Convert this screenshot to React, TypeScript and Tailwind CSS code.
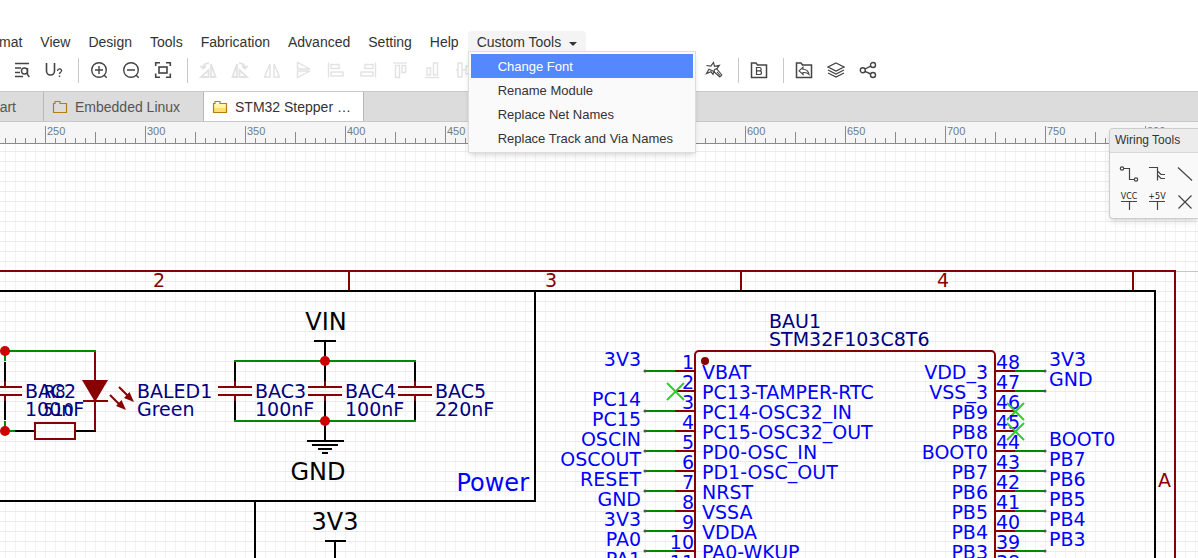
import type { ReactNode } from "react";

const menus = ["Format", "View", "Design", "Tools", "Fabrication", "Advanced", "Setting", "Help"];
const customTools = ["Change Font", "Rename Module", "Replace Net Names", "Replace Track and Via Names"];

const NAVY = "#000080";
const BLUE = "#0000ff";
const MAROON = "#880000";
const GREEN = "#008800";

function Icon({ children, muted = false }: { children: ReactNode; muted?: boolean }) {
  return (
    <svg width="18" height="18" viewBox="0 0 18 18" fill="none" stroke={muted ? "#e2e2e2" : "#444"} strokeWidth="1.4" aria-hidden="true">
      {children}
    </svg>
  );
}

function Tool({ label, children, muted }: { label: string; children: ReactNode; muted?: boolean }) {
  return (
    <button type="button" aria-label={label} className="flex h-8 w-8 shrink-0 items-center justify-center">
      <Icon muted={muted}>{children}</Icon>
    </button>
  );
}

function Divider() {
  return <div className="ml-2 mr-1 h-[25px] w-px shrink-0 bg-[#c8c8c8]" />;
}

const alignCenter = (
  <>
    <path d="M1 9h2M7.500 9H11M15 9h2" />
    <rect x="3" y="2" width="4" height="14" />
    <rect x="11" y="5" width="4" height="8" />
  </>
);

function Toolbar() {
  return (
    <div className="flex h-[38px] items-center overflow-hidden pb-1 pl-1.5">
      <Tool label="Find similar">
        <path d="M2 2.500h14M2 7h6M2 11.500h5M2 15.500h8" />
        <circle cx="11.500" cy="10" r="3" />
        <path d="M14.500 7v6.500l1.800 2.500" />
      </Tool>
      <Tool label="Annotate">
        <path d="M1.500 2v8a4 4 0 0 0 8 0V2" strokeWidth="1.600" />
        <path d="M12.500 10c0-3 4.500-2.500 4 0c-.2 1.300-2 1.400-2 3" strokeWidth="1.300" />
        <path d="M14.500 14.500v1.500" />
      </Tool>
      <Divider />
      <Tool label="Zoom in">
        <circle cx="9" cy="9" r="7.300" />
        <path d="M5 9h8M9 5v8M14.200 14.200l2.500 2.500" />
      </Tool>
      <Tool label="Zoom out">
        <circle cx="9" cy="9" r="7.300" />
        <path d="M5 9h8M14.200 14.200l2.500 2.500" />
      </Tool>
      <Tool label="Fit window">
        <path d="M1.700 5V1.700H6M12 1.700h4.300V5M16.300 12.500v3.800H12M6 16.300H1.700v-3.800" strokeWidth="1.600" />
        <rect x="5" y="6" width="8" height="6" strokeWidth="1.600" />
      </Tool>
      <Divider />
      <Tool label="Rotate left" muted>
        <path d="M12 3v13h4.500zM9.500 9v7H2z" strokeWidth="1.800" />
        <path d="M10 2.500C6.500 2 4.500 3.500 4.200 7M1.500 5l2.700 2.500L7 5" strokeWidth="1.800" />
      </Tool>
      <Tool label="Rotate right" muted>
        <path d="M6 3v13H1.500zM8.500 9v7H16z" strokeWidth="1.800" />
        <path d="M8 2.500c3.500-.5 5.500 1 5.800 4.500M11 5l2.800 2.500L16.500 5" strokeWidth="1.800" />
      </Tool>
      <Tool label="Flip horizontal" muted>
        <path d="M7 3v13H1.500zM11 3v13h5.500z" />
      </Tool>
      <Tool label="Flip vertical" muted>
        <path d="M2.500 1.500V8H15zM2.500 16.500V10H15z" />
      </Tool>
      <Tool label="Align left" muted>
        <path d="M1.500 1.500v15" />
        <rect x="4" y="3.500" width="8" height="4" />
        <rect x="4" y="11" width="12" height="4" />
      </Tool>
      <Tool label="Align right" muted>
        <path d="M16.500 1.500v15" />
        <rect x="6" y="3.500" width="8" height="4" />
        <rect x="2" y="11" width="12" height="4" />
      </Tool>
      <Tool label="Align top" muted>
        <path d="M2 2h14" />
        <rect x="4.500" y="4.500" width="4" height="12" />
        <rect x="11" y="4.500" width="3.500" height="7" />
      </Tool>
      <Tool label="Align bottom" muted>
        <path d="M2 16.500h14" />
        <rect x="4" y="7" width="3.500" height="7" />
        <rect x="10.500" y="2" width="4" height="12" />
      </Tool>
      <Tool label="Align middle" muted>{alignCenter}</Tool>
      <Tool label="Align center" muted>{alignCenter}</Tool>
      <Divider />
      <Tool label="Distribute horizontally" muted>{alignCenter}</Tool>
      <Tool label="Distribute vertically" muted>{alignCenter}</Tool>
      <Tool label="Bring to front" muted>{alignCenter}</Tool>
      <Tool label="Send to back" muted>{alignCenter}</Tool>
      <Divider />
      <Tool label="Group" muted>{alignCenter}</Tool>
      <Tool label="Wizard">
        <path d="M1.500 4.500L5.800 5 8.500 1.500l1 3.800 4.800-1L11.800 8M9 10.500l-1 2.800-2-2.500-4.500 1.700 2.500-4.200z" strokeWidth="1.200" />
        <path d="M9.500 8.500l2-.8 5.300 6.300-2 2-5.800-5.300zM12 11l3 3.500" strokeWidth="1.100" />
      </Tool>
      <Divider />
      <Tool label="Design manager">
        <path d="M1.500 16.500V2h4.500l1.500 2h9v12.500z" strokeWidth="1.500" />
        <path d="M6.500 6.500v7h3.200a1.800 1.800 0 0 0 0-3.600H6.500h3a1.700 1.700 0 0 0 0-3.400z" strokeWidth="1.200" />
      </Tool>
      <Divider />
      <Tool label="Export">
        <path d="M1.500 16.500V2h4.500l1.500 2h9v12.500z" strokeWidth="1.500" />
        <path d="M4 9.800l4-3.500v2c4 .2 5.500 2.200 6 5-1.500-1.600-3.500-2-6-1.800v2z" strokeWidth="1.100" />
      </Tool>
      <Tool label="Layers">
        <path d="M9 2l8 4-8 4-8-4zM1 9l8 4 8-4M1 12l8 4 8-4" strokeWidth="1.200" />
      </Tool>
      <Tool label="Share">
        <circle cx="3.800" cy="9.200" r="2.500" />
        <circle cx="14" cy="4" r="2.500" />
        <circle cx="14" cy="14" r="2.500" />
        <path d="M6 8l5.700-2.900M6 10.300l5.700 2.700" />
      </Tool>
    </div>
  );
}

function Folder({ filled = false }: { filled?: boolean }) {
  return (
    <svg width="16" height="14" viewBox="0 0 16 14" fill="none" className="shrink-0" aria-hidden="true">
      <path d="M1.500 3.500h13v9h-13z" fill={filled ? "#fff7a8" : "none"} />
      {filled && <path d="M2 8h12v4H2z" fill="#ffdf6b" />}
      <path d="M1.500 12.500v-9h1.500V1.500h5v2h6.500v9z" stroke="#b47d14" strokeWidth="1.200" />
    </svg>
  );
}

function Ruler() {
  const ticks = Array.from({ length: 240 }, (_, i) => i);
  return (
    <svg className="h-[22px] w-full shrink-0 bg-[#f5f5f5]" aria-label="Ruler" shapeRendering="crispEdges">
      <rect y="21" width="100%" height="1" fill="#8a8a8a" />
      {ticks.map((i) => {
        const major = i % 10 === 4;
        const half = i % 10 === 9;
        const top = major ? 4 : half ? 10 : 16;
        return <rect key={i} x={5 + i * 10} y={top} width="1" height={22 - top} fill="#8a8a8a" />;
      })}
      {Array.from({ length: 24 }, (_, i) => (
        <text key={i} x={47 + i * 100} y="13" fontSize="11" fill="#6f7c8a">
          {250 + i * 50}
        </text>
      ))}
    </svg>
  );
}

function Line({ d, c = "#000" }: { d: string; c?: string }) {
  return <path d={d} stroke={c} strokeWidth="2" fill="none" />;
}

function Label({ x, y, c = BLUE, size = 19, end, mid, children }: { x: number; y: number; c?: string; size?: number; end?: boolean; mid?: boolean; children: ReactNode }) {
  return (
    <text x={x} y={y} fill={c} fontSize={size} textAnchor={end ? "end" : mid ? "middle" : "start"}>
      {children}
    </text>
  );
}

function Capacitor({ x, y, name, value }: { x: number; y: number; name: string; value: string }) {
  return (
    <g>
      <Line d={`M${x} ${y - 29}V${y - 10}M${x} ${y + 10}V${y + 29}`} />
      <Line c={MAROON} d={`M${x} ${y - 10}V${y - 4}M${x - 17} ${y - 4}H${x + 17}M${x - 17} ${y + 4}H${x + 17}M${x} ${y + 4}V${y + 10}`} />
      <Label x={x + 20} y={y + 7} c={NAVY}>{name}</Label>
      <Label x={x + 20} y={y + 25} c={NAVY}>{value}</Label>
    </g>
  );
}

function NoConnect({ x, y }: { x: number; y: number }) {
  return <path d={`M${x - 8} ${y - 8}l17 17M${x + 9} ${y - 8}l-17 17`} stroke="#33cc33" strokeWidth="2" />;
}

function Junction({ x, y }: { x: number; y: number }) {
  return <circle cx={x} cy={y} r="5" fill="#cc0000" />;
}

const leftPins: [string, string][] = [
  ["VBAT", "3V3"],
  ["PC13-TAMPER-RTC", ""],
  ["PC14-OSC32_IN", "PC14"],
  ["PC15-OSC32_OUT", "PC15"],
  ["PD0-OSC_IN", "OSCIN"],
  ["PD1-OSC_OUT", "OSCOUT"],
  ["NRST", "RESET"],
  ["VSSA", "GND"],
  ["VDDA", "3V3"],
  ["PA0-WKUP", "PA0"],
  ["PA1", "PA1"],
];

const rightPins: [string, string][] = [
  ["VDD_3", "3V3"],
  ["VSS_3", "GND"],
  ["PB9", ""],
  ["PB8", ""],
  ["BOOT0", "BOOT0"],
  ["PB7", "PB7"],
  ["PB6", "PB6"],
  ["PB5", "PB5"],
  ["PB4", "PB4"],
  ["PB3", "PB3"],
];

function Chip() {
  return (
    <g>
      <Label x={769} y={328} c={NAVY}>BAU1</Label>
      <Label x={769} y={346} c={NAVY}>STM32F103C8T6</Label>
      <rect x="695" y="351" width="300" height="500" rx="4" fill="none" stroke={MAROON} strokeWidth="2" />
      <circle cx="705" cy="361" r="4" fill={MAROON} />
      {leftPins.map(([name, net], i) => {
        const y = 371 + i * 20;
        return (
          <g key={i}>
            <Line c={MAROON} d={`M675 ${y}H695`} />
            <Label x={694} y={y - 2} end>{i + 1}</Label>
            <Label x={702} y={y + 8}>{name}</Label>
            {net ? (
              <>
                <Line c={GREEN} d={`M645 ${y}H675`} />
                <circle cx="645" cy={y} r="1.5" fill="#555" />
                <Label x={641} y={y - 5} end>{net}</Label>
              </>
            ) : (
              <NoConnect x={675} y={y} />
            )}
          </g>
        );
      })}
      {rightPins.map(([name, net], i) => {
        const y = 371 + i * 20;
        return (
          <g key={i}>
            <Line c={MAROON} d={`M995 ${y}H1015`} />
            <Label x={996} y={y - 2}>{48 - i}</Label>
            <Label x={988} y={y + 8} end>{name}</Label>
            {net ? (
              <>
                <Line c={GREEN} d={`M1015 ${y}H1045`} />
                <circle cx="1045" cy={y} r="1.5" fill="#555" />
                <Label x={1049} y={y - 5}>{net}</Label>
              </>
            ) : (
              <NoConnect x={1015} y={y} />
            )}
          </g>
        );
      })}
      <Label x={996} y={569}>38</Label>
    </g>
  );
}

function Schematic() {
  return (
    <svg className="min-h-0 w-full flex-1 bg-white" aria-label="Schematic" fontFamily="Verdana, 'DejaVu Sans', sans-serif">
      <defs>
        <pattern id="grid" x="5" y="1" width="10" height="10" patternUnits="userSpaceOnUse">
          <path d="M.5 0V10" stroke="#f3f3f3" />
          <path d="M0 .5H10" stroke="#ebebeb" />
        </pattern>
      </defs>
      <g transform="translate(0 -144)">
        <rect y="144" width="100%" height="100%" fill="url(#grid)" />
        <path d="M1175 271.500H4000" stroke="#c8c8c8" />

        <Line c={MAROON} d="M0 271H1175V900M349 271V291M741 271V291M1133 271V291" />
        <Line d="M0 291H1155V900M535 291V501M0 501H536M255 501V900" />
        <Label x={153} y={287} c={MAROON}>2</Label>
        <Label x={545} y={287} c={MAROON}>3</Label>
        <Label x={937} y={287} c={MAROON}>4</Label>
        <Label x={1158} y={487} c={MAROON}>A</Label>

        <Capacitor x={5} y={391} name="BAC2" value="100nF" />
        <Line c={GREEN} d="M5 361V351H96M5 421V431H15" />
        <Line d="M15 431H35M75 431H96" />
        <rect x="35" y="423" width="40" height="16" fill="none" stroke={MAROON} strokeWidth="2" />
        <g fontFamily="'DejaVu Sans Condensed', 'DejaVu Sans', sans-serif">
          <Label x={44} y={398} c={NAVY} size={18}>R8</Label>
          <Label x={43} y={416} c={NAVY} size={18}>510</Label>
        </g>
        <Line c={MAROON} d="M95 352V381M95 401V430M83 401H108" />
        <path d="M82 380H108L95 402z" fill={MAROON} />
        <Line c={MAROON} d="M119 387l10 10M110 395l10 10" />
        <path d="M134 402l-10-4 5.500-6zM126 410l-10-4 5.500-6z" fill={MAROON} />
        <Label x={137} y={398} c={NAVY}>BALED1</Label>
        <Label x={137} y={416} c={NAVY}>Green</Label>
        <Junction x={5} y={351} />
        <Junction x={5} y={431} />

        <Label x={326} y={330} c="#000" size={24} mid>VIN</Label>
        <Line d="M314 341H336M325 341V362" />
        <Capacitor x={235} y={391} name="BAC3" value="100nF" />
        <Capacitor x={325} y={391} name="BAC4" value="100nF" />
        <Capacitor x={415} y={391} name="BAC5" value="220nF" />
        <Line c={GREEN} d="M234 361H416M234 421H416" />
        <Line d="M325 421V441M307 441H344M312 445H338M318 449H332M322 453H328" />
        <Junction x={325} y={361} />
        <Junction x={325} y={421} />
        <Label x={318} y={480} c="#000" size={24} mid>GND</Label>
        <Label x={529} y={491} size={24} end>Power</Label>
        <Label x={335} y={530} c="#000" size={24} mid>3V3</Label>
        <Line d="M325 541H346M335 541V600" />

        <Chip />
      </g>
    </svg>
  );
}

function WiringButton({ label, children }: { label: string; children: ReactNode }) {
  return (
    <button type="button" aria-label={label} className="h-7 w-7">
      <svg width="28" height="28" fill="none" stroke="#444" strokeWidth="1.200" aria-hidden="true">
        {children}
      </svg>
    </button>
  );
}

function FlagIcon({ text }: { text: string }) {
  return (
    <>
      <text x="14" y="11" textAnchor="middle" fontSize="8" fill="#222" stroke="none" fontFamily="'DejaVu Sans', sans-serif">
        {text}
      </text>
      <path d="M6 13.500h16M14.500 14v8" />
    </>
  );
}

function WiringTools() {
  return (
    <section className="absolute right-0 top-32 w-[89px] overflow-hidden rounded-l-sm border border-r-0 border-[#ccc] bg-[#f9f9f9] shadow-md">
      <h2 className="h-6 border-b border-[#d8d8d8] bg-[#ececec] pl-[5px] text-xs leading-[22px]">Wiring Tools</h2>
      <div className="grid grid-cols-[28px_28px_28px] pb-0.5 pl-[5px] pt-[7px]">
        <WiringButton label="Wire">
          <circle cx="7" cy="8.500" r="1.700" />
          <circle cx="21" cy="19.500" r="1.700" />
          <path d="M9 8.500h5.500v11H19" />
        </WiringButton>
        <WiringButton label="Bus entry">
          <path d="M6 7.500h8.500v13M14.500 11l3.500 3.500h4M14.500 15l3.500 3.500h4" />
        </WiringButton>
        <WiringButton label="Line">
          <path d="M7 7.500l14 13" />
        </WiringButton>
        <WiringButton label="VCC flag">
          <FlagIcon text="VCC" />
        </WiringButton>
        <WiringButton label="5V flag">
          <FlagIcon text="+5V" />
        </WiringButton>
        <WiringButton label="No connect">
          <path d="M7.500 7.500l13 13M20.500 7.500l-13 13" />
        </WiringButton>
      </div>
    </section>
  );
}

export default function App() {
  return (
    <div className="relative flex h-screen flex-col overflow-hidden bg-white font-['Liberation_Sans',Arial,sans-serif] text-[#333]">
      <nav className="-ml-[31px] flex pt-[31px] text-sm">
        {menus.map((m) => (
          <button key={m} type="button" className="h-[22px] px-[9px]">
            {m}
          </button>
        ))}
        <div className="relative">
          <button type="button" aria-haspopup="menu" aria-expanded="true" className="flex h-[22px] items-center rounded-t-sm bg-[#f4f4f4] px-[9px]">
            Custom Tools
            <svg width="8" height="4" className="ml-2 mt-1" aria-hidden="true">
              <path d="M0 0h8L4 4z" fill="#333" />
            </svg>
          </button>
          <ul role="menu" className="absolute left-0 top-5 z-10 w-[228px] border border-[#ddd] bg-[#fafafa] p-0.5 text-[13px] shadow-md">
            {customTools.map((t, i) => (
              <li key={t} role="none">
                <button type="button" role="menuitem" className={`h-6 w-full whitespace-nowrap pl-[27px] pt-0.5 text-left ${i === 0 ? "bg-[#5588ff] text-white" : ""}`}>
                  {t}
                </button>
              </li>
            ))}
          </ul>
        </div>
      </nav>

      <Toolbar />

      <div className="flex h-[31px] shrink-0 border-y border-[#c8c8c8] bg-[#dcdcdc] text-sm text-[#555]">
        <button type="button" className="flex w-11 items-center justify-end overflow-hidden border-r border-[#b8b8b8] pr-[27px]">Start</button>
        <button type="button" className="flex w-40 items-center gap-[7px] border-r border-[#b8b8b8] pl-2">
          <Folder />
          Embedded Linux
        </button>
        <button type="button" className="flex w-40 items-center gap-[7px] border-r border-[#b8b8b8] bg-white pl-2 text-[#333]">
          <Folder filled />
          STM32 Stepper …
        </button>
      </div>

      <Ruler />
      <Schematic />
      <WiringTools />
    </div>
  );
}
